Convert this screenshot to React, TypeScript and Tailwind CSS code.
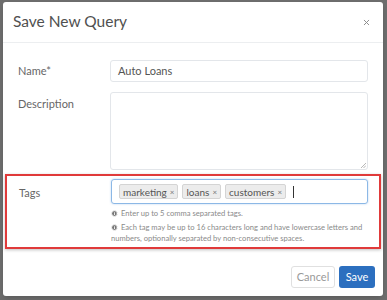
import { Info, X } from "lucide-react";

const tags = ["marketing", "loans", "customers"];

function Tag({ label }: { label: string }) {
  return (
    <span className="flex h-[15px] items-center gap-[3px] rounded-[2px] border border-[#d4d4d4] bg-[#ececec] px-[3px] text-[10px] leading-none text-[#555]">
      {label}
      <span className="text-[8px] text-[#777]">×</span>
    </span>
  );
}

export default function App() {
  return (
    <div
      className="h-[300px] w-[387px] overflow-hidden bg-[#6d6d6d] pl-[3px] pt-[2px]"
      style={{ fontFamily: "Lato, 'Open Sans', sans-serif" }}
    >
      <div className="flex h-[294px] w-[380px] flex-col rounded-[3px] bg-white shadow-md">
        {/* header */}
        <div className="flex h-[41px] items-center justify-between border-b border-[#eceef0] pl-[10px] pr-[12px]">
          <h1 className="text-[15.5px] text-[#505050]">Save New Query</h1>
          <X className="h-[9px] w-[9px] text-[#888]" strokeWidth={2.5} />
        </div>

        {/* body */}
        <div className="flex flex-col px-[15px] pt-[17px]">
          <div className="flex items-center">
            <label className="w-[92px] text-[11px] text-[#666]">Name*</label>
            <div className="flex h-[22px] flex-1 items-center rounded-[3px] border border-[#e3e6ea] px-[7px] text-[11px] text-[#555]">
              Auto Loans
            </div>
          </div>

          <div className="mt-[10px] flex">
            <label className="w-[92px] pt-[4px] text-[11px] text-[#666]">Description</label>
            <div className="relative h-[78px] flex-1 rounded-[3px] border border-[#e3e6ea]">
              <svg className="absolute bottom-[1px] right-[1px] h-[6px] w-[6px]" viewBox="0 0 6 6">
                <path d="M1 6 L6 1 M3.5 6 L6 3.5" stroke="#999" strokeWidth="0.7" />
              </svg>
            </div>
          </div>

          {/* highlighted tags section */}
          <div className="-mx-[13px] mt-[4px] flex border-2 border-[#e03a3a] pb-[3px] pl-[12px] pr-[11px] pt-[3px] shadow-[0_1px_3px_rgba(0,0,0,0.25)]">
            <label className="w-[92px] pt-[6px] text-[11px] text-[#666]">Tags</label>
            <div className="flex flex-1 flex-col">
              <div className="flex h-[25px] items-center gap-[4px] rounded-[3px] border border-[#8cb8e6] px-[7px] shadow-[0_0_2px_rgba(102,160,230,0.5)]">
                {tags.map((t) => (
                  <Tag key={t} label={t} />
                ))}
                <span className="ml-[3px] h-[12px] w-px bg-[#333]" />
              </div>
              <div className="mt-[4px] flex items-center gap-[3px] text-[7.6px] leading-[11px] text-[#8a8a8a]">
                <Info className="h-[7px] w-[7px] fill-[#777] text-white" strokeWidth={3} />
                Enter up to 5 comma separated tags.
              </div>
              <p className="mt-[3px] text-[7.6px] leading-[11px] text-[#8a8a8a]">
                <Info className="mr-[3px] inline h-[7px] w-[7px] fill-[#777] align-[-1px] text-white" strokeWidth={3} />
                Each tag may be up to 16 characters long and have lowercase letters and numbers, optionally separated by non-consecutive spaces.
              </p>
            </div>
          </div>
        </div>

        {/* footer */}
        <div className="mt-auto flex justify-end gap-[4px] pb-[8px] pr-[8px]">
          <button className="h-[22px] w-[44px] rounded-[3px] border border-[#e0e0e0] bg-white text-[11px] text-[#999]">
            Cancel
          </button>
          <button className="h-[22px] w-[36px] rounded-[3px] bg-[#2c6fbf] text-[11px] text-white">
            Save
          </button>
        </div>
      </div>
    </div>
  );
}
